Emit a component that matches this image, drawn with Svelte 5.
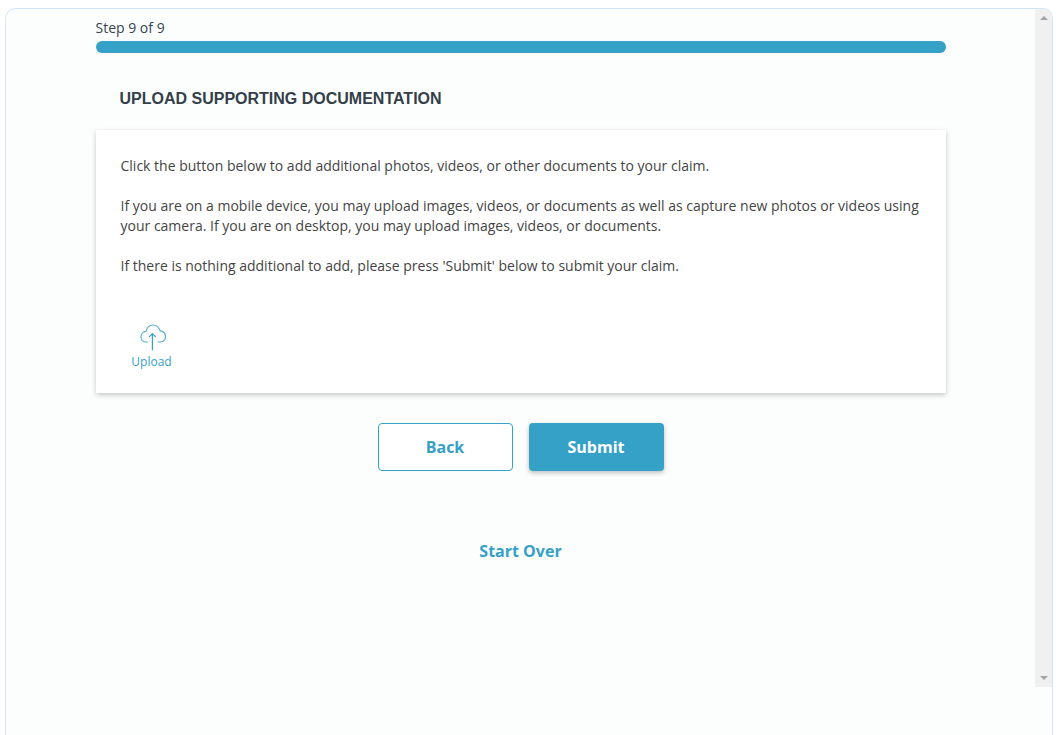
<script>
  const paragraphs = [
    'Click the button below to add additional photos, videos, or other documents to your claim.',
    'If you are on a mobile device, you may upload images, videos, or documents as well as capture new photos or videos using your camera. If you are on desktop, you may upload images, videos, or documents.',
    "If there is nothing additional to add, please press 'Submit' below to submit your claim."
  ];
</script>

<div class="page">
  <div class="frame">
    <main class="content">
      <div class="column">
        <div class="step">Step 9 of 9</div>
        <div class="bar"></div>
        <h1>UPLOAD SUPPORTING DOCUMENTATION</h1>
        <section class="card">
          {#each paragraphs as p}
            <p>{p}</p>
          {/each}
          <button class="upload">
            <svg width="28" height="28" viewBox="0 0 28 28" fill="none" stroke="#35a1c7" stroke-linecap="round" stroke-linejoin="round">
              <path stroke-width="1.2" stroke-opacity="0.85" d="M9.5 18H7.5C4.8 18 3 15.6 3 12.8C3 10 5 7.6 8 7.4C9 3.4 11.8 1 15 1C18.6 1 21 3.6 22 6.6C25 7.2 27.5 9.6 27.5 12.6C27.5 15.6 25.4 18 22.5 18H20" />
              <path stroke-width="1.2" d="M14.4 25.7V9.7M11.4 12.7L14.4 9.7L17.4 12.7" />
            </svg>
            <span>Upload</span>
          </button>
        </section>
        <div class="actions">
          <button class="btn back">Back</button>
          <button class="btn submit">Submit</button>
        </div>
        <a class="restart" href="#top">Start Over</a>
      </div>
    </main>
    <div class="scrollbar">
      <span class="arrow up"></span>
      <span class="arrow down"></span>
    </div>
  </div>
</div>

<style>
  :global(body) {
    margin: 0;
    background: #fff;
    overflow: hidden;
  }
  .page {
    height: 735px;
    padding: 8px 7px 0 5px;
    box-sizing: border-box;
    font-family: "Open Sans", sans-serif;
    color: #444;
  }
  .frame {
    height: 100%;
    box-sizing: border-box;
    display: flex;
    align-items: flex-start;
    background: #fcfefe;
    border: 1px solid #d5e3f7;
    border-bottom: 0;
    border-radius: 10px 10px 0 0;
    overflow: hidden;
  }
  .content {
    flex: 1;
    min-width: 0;
  }
  .column {
    width: 850px;
    margin: 0 auto;
    display: flex;
    flex-direction: column;
  }
  .step {
    font-size: 14px;
    line-height: 20px;
    margin-top: 9px;
    color: #35434f;
  }
  .bar {
    height: 12px;
    margin-top: 3px;
    border-radius: 6px;
    background: #35a1c7;
  }
  h1 {
    margin: 36px 0 0 24px;
    font: bold 16px/20px "Liberation Sans", Arial, sans-serif;
    color: #343f49;
  }
  .card {
    margin-top: 21px;
    height: 263px;
    box-sizing: border-box;
    padding: 26px 25px 0;
    background: #fff;
    box-shadow: 0 2px 5px rgba(0, 0, 0, 0.22);
    display: flex;
    flex-direction: column;
  }
  p {
    margin: 0 0 20px;
    font-size: 14px;
    line-height: 20px;
    color: #444;
  }
  .upload {
    margin: 28px 0 0 11px;
    padding: 0;
    width: 40px;
    border: 0;
    background: none;
    display: flex;
    flex-direction: column;
    align-items: center;
    font: 12px/16px "Open Sans", sans-serif;
    color: #35a1c7;
  }
  .upload svg {
    display: block;
    margin-bottom: 2px;
  }
  .actions {
    display: flex;
    justify-content: center;
    gap: 16px;
    margin-top: 30px;
  }
  .btn {
    width: 135px;
    height: 48px;
    box-sizing: border-box;
    border-radius: 4px;
    font: bold 16px "Open Sans", sans-serif;
    padding: 0;
  }
  .back {
    background: #fff;
    border: 1px solid #35a1c7;
    color: #35a1c7;
  }
  .submit {
    background: #35a1c7;
    border: 0;
    color: #fff;
    box-shadow: 0 2px 5px rgba(0, 0, 0, 0.25);
  }
  .restart {
    margin-top: 69px;
    text-align: center;
    font-size: 16px;
    font-weight: bold;
    line-height: 22px;
    color: #35a1c7;
    text-decoration: none;
  }
  .scrollbar {
    width: 17px;
    height: 678px;
    flex: none;
    background: #f0f0f0;
    display: flex;
    flex-direction: column;
    justify-content: space-between;
    align-items: center;
    padding: 7px 0;
    box-sizing: border-box;
  }
  .arrow {
    width: 0;
    height: 0;
    border-left: 4px solid transparent;
    border-right: 4px solid transparent;
  }
  .up {
    border-bottom: 4px solid #a3a3a3;
  }
  .down {
    border-top: 4px solid #a3a3a3;
  }
</style>
